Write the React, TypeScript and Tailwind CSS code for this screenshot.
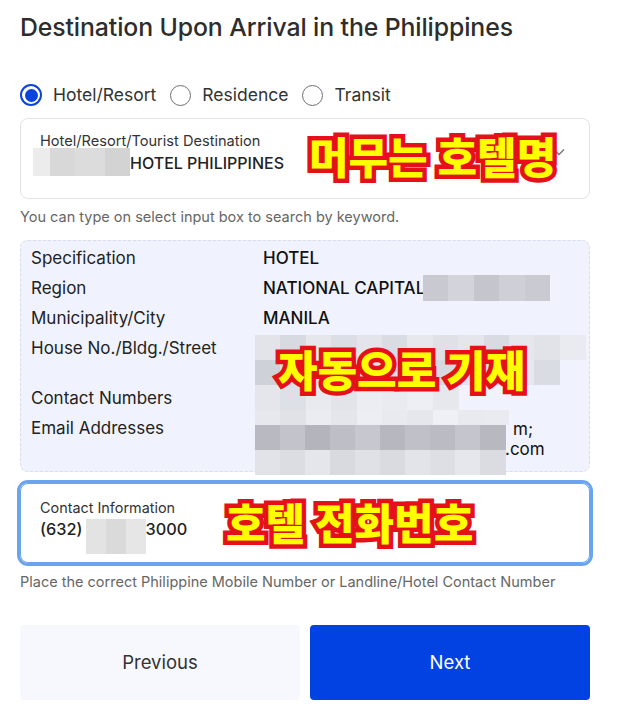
import React from "react";

type Row = { x: number; y: number; h: number; w?: number; colors: string[] };

const mosaic: Row[] = [
  { x: 255, y: 335, h: 25, colors: ["#e2e4ea", "#d8dae2", "#e5e7ed", "#dcdee5", "#e3e5eb", "#dadce3", "#e6e8ee", "#dfe1e7", "#e4e6ec", "#d9dbe2", "#e5e7ed", "#e1e3e9", "#e9ebf1"] },
  { x: 255, y: 360, h: 25, colors: ["#cfd1d8", "#dcdee5", "#e1e3e9", "#d9dbe2", "#e4e6ec", "#dcdee4", "#e0e2e8", "#d7d9e0", "#e3e5eb", "#dfe1e7", "#e6e8ee", "#dadce3"] },
  { x: 255, y: 385, h: 25, colors: ["#e4e6eb", "#dde0e6", "#e8eaef", "#e2e4ea", "#ebedf2", "#e9ebf0", "#edeff4", "#e6e8ee"] },
  { x: 255, y: 410, h: 15, colors: ["#e6e8ed", "#e0e2e8", "#eaecf1", "#e4e6eb", "#eceef3", "#e8eaef", "#e5e7ec", "#eef0f5", "#e8eaf0", "#e9ebf0"] },
  { x: 255, y: 425, h: 25, w: 25, colors: ["#b9bac1", "#c3c4cb", "#b4b5bc", "#bebfc6", "#c7c8cf", "#b7b8bf", "#c0c1c8", "#bbbcc3", "#c5c6cd", "#b8b9c0"] },
  { x: 255, y: 450, h: 25, w: 25, colors: ["#e2e3e8", "#dcdde3", "#e5e6eb", "#d9dae0", "#e0e1e6", "#dadbe1", "#e3e4e9", "#dedfe4", "#e6e7ec", "#dbdce2"] },
  { x: 423, y: 275, h: 26, colors: ["#c8c9d1", "#d3d4db", "#c4c5cd", "#cfd0d7", "#c9cad2"] },
];

function Mosaic({ ox, oy }: { ox: number; oy: number }) {
  const tiles: React.ReactNode[] = [];
  mosaic.forEach((r, ri) =>
    r.colors.forEach((c, ci) => {
      const w = r.w ?? 25.4;
      tiles.push(
        <div
          key={`${ri}-${ci}`}
          className="absolute"
          style={{ left: r.x - ox + ci * w, top: r.y - oy, width: w + 0.5, height: r.h, background: c }}
        />
      );
    })
  );
  return <>{tiles}</>;
}

function Overlay({ text, className }: { text: string; className: string }) {
  return (
    <div
      className={
        "pointer-events-none absolute z-10 whitespace-nowrap font-['Noto_Sans_CJK_KR',sans-serif] text-[43px] font-black leading-none text-[#ffff00] [-webkit-text-stroke:9px_#e5101a] [paint-order:stroke_fill] " +
        className
      }
    >
      {text}
    </div>
  );
}

function Radio({ checked, label }: { checked?: boolean; label: string }) {
  return (
    <label className="flex items-center gap-[11px]">
      {checked ? (
        <span className="flex h-[22px] w-[22px] items-center justify-center rounded-full border-2 border-[#0a44dd]">
          <span className="h-[13px] w-[13px] rounded-full bg-[#0a44dd]" />
        </span>
      ) : (
        <span className="h-[21px] w-[21px] rounded-full border-[1.5px] border-[#6f6f6f]" />
      )}
      <span className="text-[17.5px] text-[#333]">{label}</span>
    </label>
  );
}

export default function App() {
  return (
    <div className="h-[721px] w-[617px] overflow-hidden bg-white pl-5 pr-[27px] pt-[12px] font-['Inter',sans-serif] text-[#333]">
      <h1 className="text-[24.8px] font-medium leading-[30px] tracking-[-0.1px] text-[#2d2d2d]">
        Destination Upon Arrival in the Philippines
      </h1>

      <div className="mt-[41px] flex h-[24px] items-center gap-[14px]">
        <Radio checked label="Hotel/Resort" />
        <Radio label="Residence" />
        <Radio label="Transit" />
      </div>

      <div className="relative mt-[11px] flex h-[81px] items-start rounded-[8px] border border-[#e2e2e2] pl-[19px] pr-[24px] pt-[13px]">
        <div className="flex-1">
          <div className="text-[14.6px] leading-[18px] text-[#333]">Hotel/Resort/Tourist Destination</div>
          <div className="mt-[3px] whitespace-nowrap text-[16px] font-medium leading-[20px] text-[#222]">
            <span className="relative -top-[5px] -ml-[7px] inline-flex h-[28px] w-[97px] align-top">
              <span className="h-full w-[17px] bg-[#ececec]" />
              <span className="h-full w-[25px] bg-[#d8d8d8]" />
              <span className="h-full w-[30px] bg-[#dcdcdc]" />
              <span className="h-full w-[25px] bg-[#d3d3d3]" />
            </span>
            HOTEL PHILIPPINES
          </div>
        </div>
        <svg className="mt-[16px]" width="12" height="8" viewBox="0 0 12 8" fill="none">
          <path d="M1 1.5L6 6.5L11 1.5" stroke="#777" strokeWidth="1.4" />
        </svg>
        <Overlay text="머무는 호텔명" className="left-[288px] top-[15px]" />
      </div>

      <p className="mt-[9px] text-[14.5px] leading-[18px] text-[#666]">
        You can type on select input box to search by keyword.
      </p>

      <div className="relative mt-[14px] h-[232px] rounded-[8px] border border-dashed border-[#d6ddee] bg-[#f0f3fd] pl-[10px] pt-[2px] text-[17px] text-[#222]">
        <div className="grid grid-cols-[232px_1fr] leading-[30px]">
          <div>Specification</div>
          <div className="font-medium text-[#111]">HOTEL</div>
        </div>
        <div className="grid grid-cols-[232px_1fr] leading-[30px]">
          <div>Region</div>
          <div className="font-medium text-[#111]">NATIONAL CAPITAL</div>
        </div>
        <div className="grid grid-cols-[232px_1fr] leading-[30px]">
          <div>Municipality/City</div>
          <div className="font-medium text-[#111]">MANILA</div>
        </div>
        <div className="grid h-[50px] grid-cols-[232px_1fr] leading-[30px]">
          <div>House No./Bldg./Street</div>
          <div />
        </div>
        <div className="grid grid-cols-[232px_1fr] leading-[30px]">
          <div>Contact Numbers</div>
          <div />
        </div>
        <div className="grid grid-cols-[232px_1fr]">
          <div className="leading-[30px]">Email Addresses</div>
          <div className="pt-[6px] leading-[20px] text-[#111]">
            <div className="pl-[250px]">m;</div>
            <div className="pl-[242px]">.com</div>
          </div>
        </div>
        <Mosaic ox={21} oy={241} />
        <Overlay text="자동으로 기재" className="left-[257px] top-[106px]" />
      </div>

      <div className="relative mt-[11px] h-[80px] rounded-[8px] border border-[#6aa3ee] pl-[19px] pt-[15px] ring-[3px] ring-[#6aa3ee]">
        <div className="text-[14.4px] leading-[18px] text-[#333]">Contact Information</div>
        <div className="mt-[2px] whitespace-nowrap text-[16.3px] font-medium leading-[20px] text-[#222]">
          (632)
          <span className="ml-[3px] inline-flex h-[35px] w-[60px] align-top">
            <span className="h-full w-[20px] bg-[#e3e3e3]" />
            <span className="h-full w-[20px] bg-[#dadada]" />
            <span className="h-full w-[20px] bg-[#e6e6e6]" />
          </span>
          3000
        </div>
        <Overlay text="호텔 전화번호" className="left-[205px] top-[16px]" />
      </div>

      <p className="mt-[10px] text-[14.5px] leading-[18px] text-[#666]">
        Place the correct Philippine Mobile Number or Landline/Hotel Contact Number
      </p>

      <div className="mt-[34px] grid h-[75px] grid-cols-2 gap-[10px]">
        <button className="rounded-[4px] bg-[#f7f8fd] text-[18.5px] text-[#333]">Previous</button>
        <button className="rounded-[4px] bg-[#0241e2] text-[18.5px] text-white">Next</button>
      </div>
    </div>
  );
}
